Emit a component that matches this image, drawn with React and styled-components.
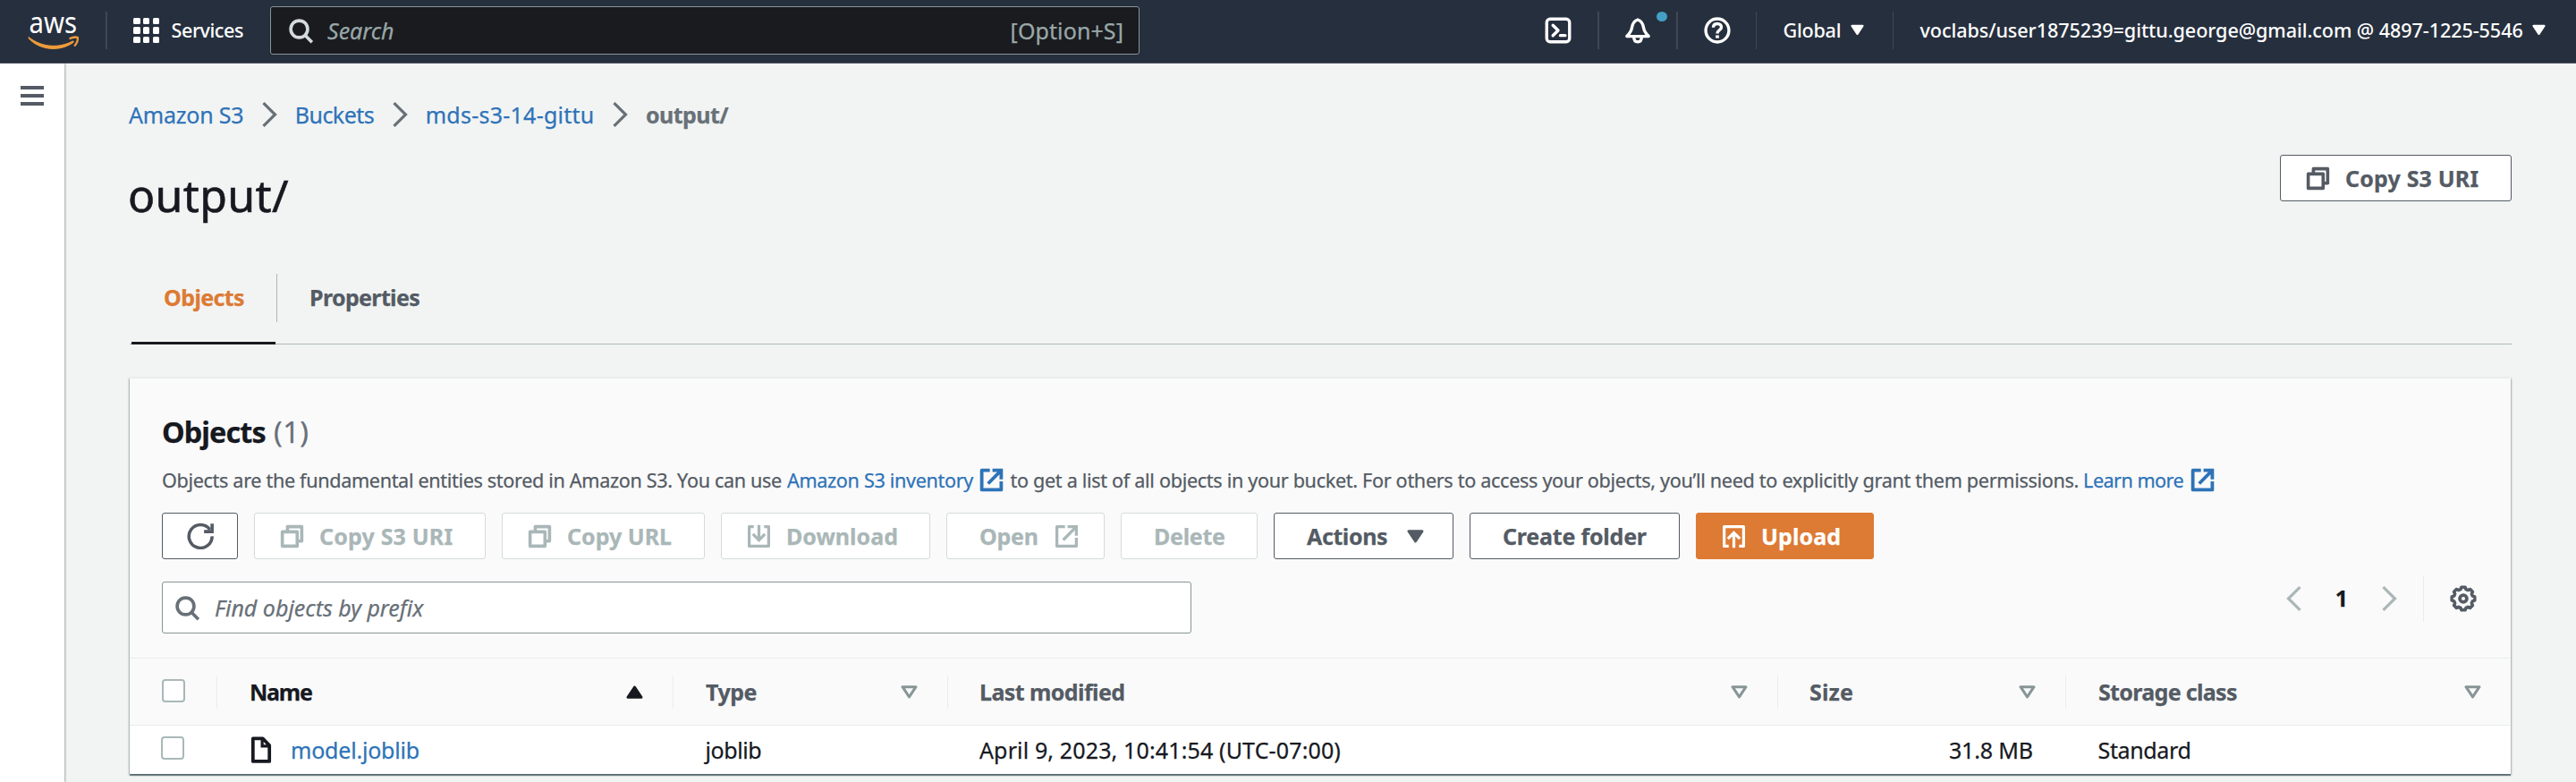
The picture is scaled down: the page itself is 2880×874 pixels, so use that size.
import React from "react";
import styled, { createGlobalStyle, css } from "styled-components";

const color = {
  nav: "#262f3e",
  ink: "#16191f",
  text: "#545b64",
  muted: "#687078",
  link: "#2e73b8",
  orange: "#dd7a33",
  disabled: "#aab7b8",
  page: "#f2f4f3",
  line: "#eaeded",
};

const GlobalStyle = createGlobalStyle`
  * { box-sizing: border-box; }
  body {
    margin: 0;
    background: ${color.page};
    font-family: "Noto Sans", "Open Sans", sans-serif;
    font-size: 25px;
    color: ${color.ink};
    white-space: nowrap;
    -webkit-text-stroke: 0.25px currentColor;
  }
  svg { display: block; flex: none; }
`;

const Text = styled.span`
  letter-spacing: ${(p) => p.$track || 0}px;
`;

/* ---------- icons ---------- */

const StrokeIcon = styled.svg.attrs({ viewBox: "0 0 16 16" })`
  width: ${(p) => p.$size || 29}px;
  height: ${(p) => p.$size || 29}px;
  fill: none;
  stroke: currentColor;
  stroke-width: ${(p) => p.$weight || 1.8};
`;

const CopyIcon = () => (
  <StrokeIcon $weight={2}>
    <path d="M2 5.2h9.2V14H2z" strokeLinejoin="round" />
    <path d="M5.2 5V2H14v8.9h-2.6" strokeLinejoin="round" />
  </StrokeIcon>
);
const ExternalIcon = ({ weight }) => (
  <StrokeIcon $weight={weight}>
    <path d="M7 2H2v12h12V8.8" strokeLinejoin="round" />
    <path d="M8.6 2H14v5.6M14 2 5.9 10.2" />
  </StrokeIcon>
);
const DownloadIcon = () => (
  <StrokeIcon>
    <path d="M4.8 2H2v12h12V2h-2.8" strokeLinejoin="round" />
    <path d="M8 1v9.4M4.3 6.6 8 10.3l3.7-3.7" />
  </StrokeIcon>
);
const UploadIcon = () => (
  <StrokeIcon>
    <path d="M4.8 14H2V2h12v12h-2.8" strokeLinejoin="round" />
    <path d="M8 15V5.8M4.3 9.5 8 5.8l3.7 3.7" />
  </StrokeIcon>
);
const RefreshIcon = () => (
  <StrokeIcon $size={30} $weight={1.9}>
    <path d="M15 8.2A6.9 6.9 0 1 1 13.7 4.2" />
    <path d="M10.2 5.4H15V.6" />
  </StrokeIcon>
);
const SearchIcon = () => (
  <StrokeIcon $weight={2}>
    <circle cx="6.9" cy="6.9" r="5.2" />
    <path d="m10.6 10.8 4.2 4.2" />
  </StrokeIcon>
);
const FileIcon = () => (
  <StrokeIcon $size={30} $weight={2}>
    <path d="M3.1 1.2h5.8l4 4.2v9.5H3.1z" strokeLinejoin="round" />
    <path d="M8.6 1.2v4.6h4.3" strokeWidth="1.7" />
  </StrokeIcon>
);
const TerminalIcon = () => (
  <StrokeIcon $size={30}>
    <rect x="1.2" y="1.2" width="13.6" height="13.6" rx="2" />
    <path d="m4.9 4.9 3.1 3.1-3.1 3.1M9.3 11h2.9" strokeLinecap="round" strokeLinejoin="round" />
  </StrokeIcon>
);
const BellIcon = () => (
  <StrokeIcon $size={30}>
    <path
      d="M8 1.6c-2.6.9-3.2 2.7-3.5 4.8C4.2 8.6 3 10 1.5 11.5h13c-1.5-1.5-2.7-2.9-3-5.1C11.2 4.3 10.6 2.5 8 1.6z"
      strokeLinejoin="round"
    />
    <path d="M5.7 11.8c0 1.9.9 3 2.3 3s2.3-1.1 2.3-3" />
  </StrokeIcon>
);
const HelpIcon = () => (
  <StrokeIcon $size={30}>
    <circle cx="8" cy="8" r="6.9" />
    <path d="M5.6 6.3c0-1.500 1-2.300 2.400-2.300s2.400.9 2.400 2.100c0 1.600-2.400 1.700-2.400 3.700" />
    <path d="M8 10.900v1.700" strokeWidth="2" />
  </StrokeIcon>
);
const gearPath =
  Array.from({ length: 8 }, (_, i) => {
    const at = (deg, r) => {
      const a = ((i * 45 + deg - 90) * Math.PI) / 180;
      return `${(8 + r * Math.cos(a)).toFixed(2)} ${(8 + r * Math.sin(a)).toFixed(2)}`;
    };
    return `${i ? "L" : "M"}${at(-9, 6.9)}L${at(9, 6.9)}L${at(16, 5.7)}L${at(29, 5.7)}`;
  }).join("") + "Z";
const GearIcon = () => (
  <StrokeIcon $size={30} $weight={1.9}>
    <path d={gearPath} strokeLinejoin="round" />
    <circle cx="8" cy="8" r="2.1" strokeWidth="2" />
  </StrokeIcon>
);

const Chevron = styled.svg.attrs({ viewBox: "0 0 17 28" })`
  width: 17px;
  height: 28px;
  fill: none;
  stroke: currentColor;
  stroke-width: 3.2;
  transform: ${(p) => (p.$back ? "scaleX(-1)" : "none")};
`;
const ChevronIcon = ({ back }) => (
  <Chevron $back={back}>
    <path d="M1.5 1.2 14.5 14 1.5 26.8" />
  </Chevron>
);

const Triangle = styled.svg.attrs({ viewBox: "0 0 19 15" })`
  width: ${(p) => p.$w || 19}px;
  height: ${(p) => p.$h || 15}px;
  fill: ${(p) => (p.$hollow ? "none" : "currentColor")};
  stroke: currentColor;
  stroke-width: 3;
  stroke-linejoin: round;
  transform: ${(p) => (p.$up ? "scaleY(-1)" : "none")};
`;
const Caret = (p) => (
  <Triangle {...p}>
    <path d="M2 1.7h15L9.5 12.9z" />
  </Triangle>
);

/* ---------- top navigation ---------- */

const TopNav = styled.header`
  display: flex;
  align-items: center;
  height: 71px;
  padding-bottom: 2px;
  background: ${color.nav};
  border-bottom: 1px solid #545362;
  color: #fff;
  font-size: 21.6px;
  font-weight: 500;
  -webkit-text-stroke-width: 0;
`;
const Brand = styled.div`
  display: flex;
  align-items: center;
  flex: none;
  width: 302px;
  padding-left: 31px;
`;
const NavDivider = styled.i`
  flex: none;
  width: ${(p) => p.$w || 1}px;
  height: 42px;
  background: #414752;
`;
const Logo = styled.svg`
  width: 58px;
  height: 66px;
  margin-right: 29px;
  overflow: visible;
`;
const ServicesButton = styled.div`
  display: flex;
  align-items: center;
  gap: 13.4px;
  margin-left: 29px;
  line-height: 30px;

  span { padding-bottom: 1px; }
`;
const AppGrid = styled.div`
  display: grid;
  grid-template-columns: repeat(3, 7.6px);
  grid-auto-rows: 7.2px;
  gap: 3.2px;

  i { background: #fff; border-radius: 1.5px; }
`;
const GlobalSearch = styled.div`
  display: flex;
  align-items: center;
  width: 972px;
  height: 54px;
  padding: 0 17px 0 19px;
  border: 1px solid #879596;
  border-radius: 3px;
  background: #1a1b1f;
  color: #99a8a8;
  font-size: 25px;
  font-weight: 400;
  -webkit-text-stroke-width: 0.25px;

  svg { color: #d5dbdb; margin-right: 15px; }
  em { flex: 1; }
`;
const NavEnd = styled.nav`
  display: flex;
  align-items: center;
  margin-left: auto;
`;
const NavCell = styled.div`
  position: relative;
  display: flex;
  align-items: center;
  justify-content: center;
  width: ${(p) => p.$w}px;
  height: 42px;
`;
const NavMenu = styled.div`
  display: flex;
  align-items: center;
  gap: 10.5px;
  width: ${(p) => p.$w}px;
  padding: 0 0 1px 29.5px;
`;
const Dot = styled.i`
  position: absolute;
  top: 0;
  right: 10px;
  width: 12px;
  height: 11px;
  border-radius: 50%;
  background: #439fc6;
`;

/* ---------- page frame ---------- */

const Body = styled.div`
  display: flex;
  height: 803px;
`;
const SideRail = styled.aside`
  flex: none;
  width: 72px;
  padding: 25px 0 0 23px;
  background: #fff;
  box-shadow: 1px 0 2px rgba(0, 28, 36, 0.35);
`;
const Hamburger = styled.div`
  display: grid;
  gap: 5px;
  width: 26px;

  i { height: 4px; background: ${color.text}; }
`;
const Main = styled.main`
  flex: 1;
  padding: 42px 72px 0 73px;
`;
const Breadcrumbs = styled.nav`
  display: flex;
  align-items: center;
  height: 29px;
  margin-left: -1px;
  color: ${color.link};

  svg { color: ${color.muted}; margin: 0 20px 0 20.5px; }
`;
const Current = styled(Text)`
  color: ${color.muted};
  font-weight: 700;
`;
const TitleRow = styled.div`
  display: flex;
  justify-content: space-between;
  align-items: flex-start;
  margin-top: 31px;
  height: 90px;
`;
const Title = styled.h1`
  margin: 0 0 0 -2px;
  font-size: 50px;
  font-weight: 400;
  line-height: 91px;
  letter-spacing: 0.35px;
  -webkit-text-stroke-width: 0.6px;
`;

const Tabs = styled.div`
  display: flex;
  align-items: flex-start;
  height: 79px;
  margin-top: 43px;
  padding-left: 2px;
  border-bottom: 1px solid ${color.disabled};
  line-height: 53px;
  font-weight: 700;
`;
const Tab = styled.div`
  height: 79px;
  padding: 0 36px;
  letter-spacing: ${(p) => p.$track}px;
  color: ${color.text};
  ${(p) =>
    p.$active &&
    css`
      width: 161px;
      color: ${color.orange};
      border-bottom: 3px solid ${color.ink};
    `}
`;
const TabDivider = styled.i`
  width: 1px;
  height: 54px;
  margin-left: 1px;
  background: ${color.disabled};
`;

/* ---------- objects panel ---------- */

const Panel = styled.section`
  width: 2662px;
  margin-top: 37px;
  border-top: 1px solid ${color.line};
  background: #fff;
  box-shadow: 0 2px 1px rgba(0, 28, 36, 0.45), 1px 1px 2px rgba(0, 28, 36, 0.25), -1px 1px 2px rgba(0, 28, 36, 0.25);
`;
const PanelHead = styled.div`
  padding: 38px 36px 27px;
  background: #fafafa;
`;
const PanelTitle = styled.h2`
  display: flex;
  gap: 9px;
  margin: 0;
  font-size: 32.4px;
  font-weight: 700;
  line-height: 43px;
  height: 44px;
  letter-spacing: -0.89px;
`;
const Count = styled.span`
  color: ${color.muted};
  font-weight: 400;
  letter-spacing: 0.6px;
`;
const Description = styled.div`
  display: flex;
  align-items: center;
  height: 40px;
  margin-top: 11px;
  color: ${color.text};
  font-size: 21.6px;
`;
const DocLink = styled.a`
  display: flex;
  align-items: center;
  gap: 6.5px;
  margin: 0 6px 0 ${(p) => p.$before}px;
  color: ${color.link};
`;

const Actions = styled.div`
  display: flex;
  gap: 18px;
  margin-top: 17px;
`;
const Button = styled.div`
  display: flex;
  align-items: center;
  gap: ${(p) => p.$gap || 16}px;
  flex: none;
  width: ${(p) => p.$w}px;
  height: 52px;
  padding-left: ${(p) => (p.$icon ? 27 : 36)}px;
  border: 1px solid ${color.text};
  border-radius: 3px;
  background: #fff;
  color: ${color.text};
  font-weight: 700;
  ${(p) =>
    p.$disabled &&
    css`
      border-color: #d5dbdb;
      color: ${color.disabled};
    `}
  ${(p) =>
    p.$primary &&
    css`
      border-color: ${color.orange};
      background: ${color.orange};
      color: #fff;
    `}

  span { padding-bottom: 1px; }
`;

const Filters = styled.div`
  display: flex;
  justify-content: space-between;
  align-items: flex-start;
  margin-top: 25px;
`;
const FindInput = styled.div`
  display: flex;
  align-items: center;
  width: 1151px;
  height: 58px;
  padding: 0 13px;
  border: 1px solid #879596;
  border-radius: 3px;
  background: #fff;
  color: ${color.muted};

  svg { margin-right: 16px; }
`;
const Pager = styled.div`
  display: flex;
  align-items: center;
  height: 52px;
  margin: -7px 2px 0 0;
  color: ${color.disabled};
`;
const PageNumber = styled.b`
  margin: 0 38px;
  padding-bottom: 2px;
  color: ${color.ink};
  font-weight: 700;
`;
const Preferences = styled.div`
  display: flex;
  align-items: center;
  height: 52px;
  margin-left: 29px;
  padding-left: 29px;
  border-left: 1px solid ${color.line};
  color: ${color.text};
`;

const GridRow = styled.div`
  display: grid;
  grid-template-columns: 98px 510px 307px 928px 322px 1fr;
  align-items: center;
`;
const HeadRow = styled(GridRow)`
  height: 76px;
  border: solid ${color.line};
  border-width: 1px 0;
  background: #fafafa;
  color: ${color.text};
  font-weight: 700;
`;
const HeadCell = styled.div`
  display: flex;
  align-items: center;
  justify-content: space-between;
  height: 37px;
  padding: 0 33px 0 ${(p) => p.$left}px;
  border-right: ${(p) => (p.$last ? 0 : 1)}px solid ${color.line};
  color: ${(p) => (p.$sorted ? color.ink : "inherit")};

  svg { color: ${(p) => (p.$sorted ? color.ink : "#879596")}; }
`;
const BodyRow = styled(GridRow)`
  height: 54px;
`;
const Cell = styled.div`
  display: flex;
  align-items: center;
  justify-content: ${(p) => (p.$end ? "flex-end" : "flex-start")};
  padding: 0 37px 0 ${(p) => p.$left || 34}px;

  span { padding-bottom: 1px; }
`;
const ObjectLink = styled(Text)`
  margin-left: 18px;
  color: ${color.link};
`;
const Checkbox = styled.i`
  width: 26px;
  height: 26px;
  margin-bottom: ${(p) => p.$lift}px;
  border: 2px solid ${color.disabled};
  border-radius: 4px;
  background: #fff;
`;

const columns = [
  { label: "Name", track: -1.26, left: 36, sorted: true },
  { label: "Type", track: -0.5, left: 36 },
  { label: "Last modified", track: -0.57, left: 35 },
  { label: "Size", track: 0.1, left: 35 },
  { label: "Storage class", track: -0.67, left: 36, last: true },
];

export default function App() {
  return (
    <>
      <GlobalStyle />
      <TopNav>
        <Brand>
          <Logo viewBox="0 -9 58 66">
            <text x="1.5" y="26.5" fontSize="32" fontWeight="400" fill="#fff" textLength="53.5" lengthAdjust="spacingAndGlyphs">
              aws
            </text>
            <path d="M1 31.5C16 43.5 36 44 50.5 35.8l1 1.2C37 48 14 47 1 32.8z" fill="#ee9c3a" stroke="#ee9c3a" strokeWidth="1" strokeLinejoin="round" />
            <path d="M46.5 33.2c4-1.9 7-2 9.3-1.4.5 3-.8 6.7-3.7 9.7" fill="none" stroke="#ee9c3a" strokeWidth="2.3" />
          </Logo>
          <NavDivider $w={2} />
          <ServicesButton>
            <AppGrid>
              {Array.from({ length: 9 }, (_, i) => (
                <i key={i} />
              ))}
            </AppGrid>
            <Text $track={-0.46}>Services</Text>
          </ServicesButton>
        </Brand>
        <GlobalSearch>
          <SearchIcon />
          <em>Search</em>
          <Text $track={0.1}>[Option+S]</Text>
        </GlobalSearch>
        <NavEnd>
          <NavCell $w={88}>
            <TerminalIcon />
          </NavCell>
          <NavDivider $w={2} />
          <NavCell $w={86}>
            <BellIcon />
            <Dot />
          </NavCell>
          <NavDivider $w={2} />
          <NavCell $w={87}>
            <HelpIcon />
          </NavCell>
          <NavDivider />
          <NavMenu $w={152}>
            <Text $track={-0.25}>Global</Text>
            <Caret $w={15} $h={13} />
          </NavMenu>
          <NavDivider />
          <NavMenu $w={763}>
            <Text $track={-0.08}>voclabs/user1875239=gittu.george@gmail.com @ 4897-1225-5546</Text>
            <Caret $w={15} $h={13} />
          </NavMenu>
        </NavEnd>
      </TopNav>

      <Body>
        <SideRail>
          <Hamburger>
            <i />
            <i />
            <i />
          </Hamburger>
        </SideRail>
        <Main>
          <Breadcrumbs>
            <Text $track={-0.22}>Amazon S3</Text>
            <ChevronIcon />
            <Text $track={-0.53}>Buckets</Text>
            <ChevronIcon />
            <Text $track={0.25}>mds-s3-14-gittu</Text>
            <ChevronIcon />
            <Current $track={-0.55}>output/</Current>
          </Breadcrumbs>

          <TitleRow>
            <Title>output/</Title>
            <Button $w={259} $icon>
              <CopyIcon />
              <Text $track={0.18}>Copy S3 URI</Text>
            </Button>
          </TitleRow>

          <Tabs>
            <Tab $active $track={-0.6}>Objects</Tab>
            <TabDivider />
            <Tab $track={-0.64}>Properties</Tab>
          </Tabs>

          <Panel>
            <PanelHead>
              <PanelTitle>
                Objects <Count>(1)</Count>
              </PanelTitle>
              <Description>
                <Text $track={-0.33}>Objects are the fundamental entities stored in Amazon S3. You can use</Text>
                <DocLink $before={6}>
                  <Text $track={-0.33}>Amazon S3 inventory</Text>
                  <ExternalIcon weight={2.1} />
                </DocLink>
                <Text $track={-0.31}>
                  to get a list of all objects in your bucket. For others to access your objects, you’ll need to explicitly
                  grant them permissions.
                </Text>
                <DocLink $before={5}>
                  <Text $track={-0.53}>Learn more</Text>
                  <ExternalIcon weight={2.1} />
                </DocLink>
              </Description>

              <Actions>
                <Button $w={85} $icon>
                  <RefreshIcon />
                </Button>
                <Button $w={259} $icon $disabled>
                  <CopyIcon />
                  <Text $track={0.18}>Copy S3 URI</Text>
                </Button>
                <Button $w={227} $icon $disabled>
                  <CopyIcon />
                  <Text>Copy URL</Text>
                </Button>
                <Button $w={234} $icon $disabled>
                  <DownloadIcon />
                  <Text>Download</Text>
                </Button>
                <Button $w={177} $gap={17.5} $disabled>
                  <Text $track={-0.23}>Open</Text>
                  <ExternalIcon />
                </Button>
                <Button $w={153} $disabled>
                  <Text $track={-0.3}>Delete</Text>
                </Button>
                <Button $w={201} $gap={22}>
                  <Text $track={-0.4}>Actions</Text>
                  <Caret />
                </Button>
                <Button $w={235}>
                  <Text $track={-0.21}>Create folder</Text>
                </Button>
                <Button $w={199} $icon $primary>
                  <UploadIcon />
                  <Text $track={0.1}>Upload</Text>
                </Button>
              </Actions>

              <Filters>
                <FindInput>
                  <SearchIcon />
                  <em>Find objects by prefix</em>
                </FindInput>
                <Pager>
                  <ChevronIcon back />
                  <PageNumber>1</PageNumber>
                  <ChevronIcon />
                  <Preferences>
                    <GearIcon />
                  </Preferences>
                </Pager>
              </Filters>
            </PanelHead>

            <HeadRow>
              <HeadCell $left={36}>
                <Checkbox $lift={3} />
              </HeadCell>
              {columns.map((c) => (
                <HeadCell key={c.label} $left={c.left} $sorted={c.sorted} $last={c.last}>
                  <Text $track={c.track}>{c.label}</Text>
                  <Caret $up={c.sorted} $hollow={!c.sorted} />
                </HeadCell>
              ))}
            </HeadRow>
            <BodyRow>
              <Cell $left={35}>
                <Checkbox $lift={4} />
              </Cell>
              <Cell>
                <FileIcon />
                <ObjectLink $track={-0.2}>model.joblib</ObjectLink>
              </Cell>
              <Cell $left={35.5}>
                <Text $track={-0.43}>joblib</Text>
              </Cell>
              <Cell $left={35}>
                <Text $track={0.14}>April 9, 2023, 10:41:54 (UTC-07:00)</Text>
              </Cell>
              <Cell $end>
                <Text $track={-0.13}>31.8 MB</Text>
              </Cell>
              <Cell $left={35.5}>
                <Text $track={-0.35}>Standard</Text>
              </Cell>
            </BodyRow>
          </Panel>
        </Main>
      </Body>
    </>
  );
}
